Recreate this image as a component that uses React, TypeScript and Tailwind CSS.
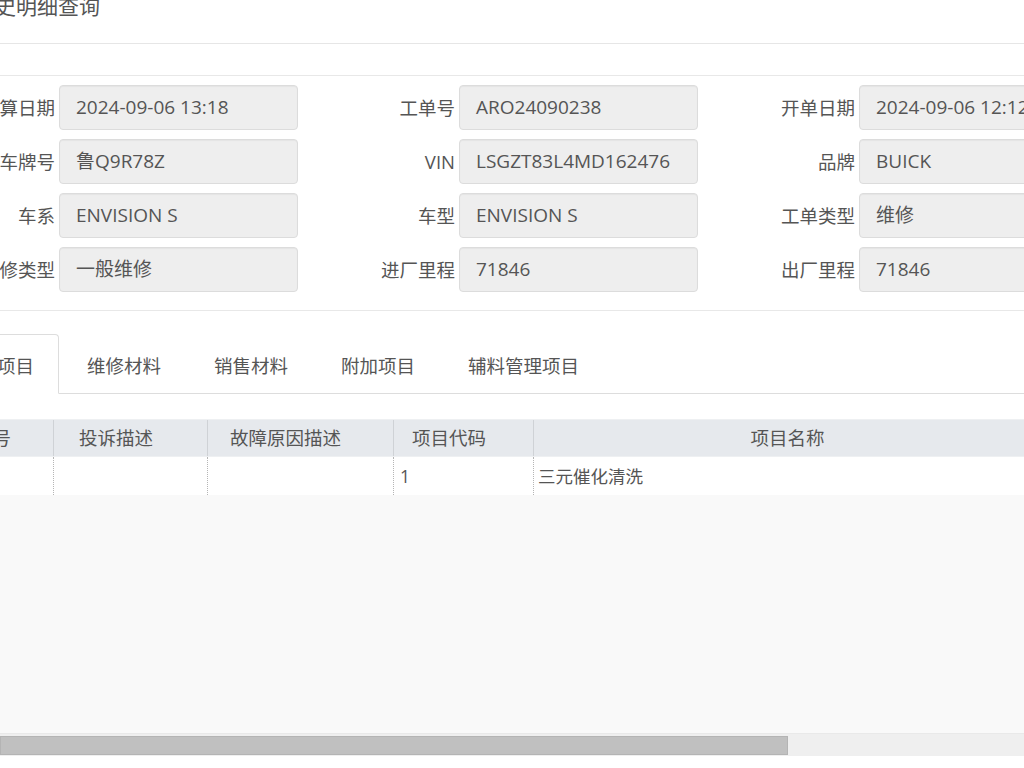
import React from "react";

const font = { fontFamily: '"Open Sans", "Noto Sans CJK SC", sans-serif' };

const rows: [string, string][][] = [
  [["结算日期", "2024-09-06 13:18"], ["工单号", "ARO24090238"], ["开单日期", "2024-09-06 12:12"]],
  [["车牌号", "鲁Q9R78Z"], ["VIN", "LSGZT83L4MD162476"], ["品牌", "BUICK"]],
  [["车系", "ENVISION S"], ["车型", "ENVISION S"], ["工单类型", "维修"]],
  [["维修类型", "一般维修"], ["进厂里程", "71846"], ["出厂里程", "71846"]],
];

const tabs = ["维修项目", "维修材料", "销售材料", "附加项目", "辅料管理项目"];

export default function App() {
  return (
    <div className="w-[1024px] h-[768px] overflow-hidden bg-white text-[#555]" style={font}>
      <div className="w-[1400px] ml-[-41px] flex flex-col">
        {/* title */}
        <div className="h-[44px] border-b border-[#e6e6e6]">
          <div className="text-[21px] leading-[21px] text-[#555] mt-[-4px] ml-[15px]">历史明细查询</div>
        </div>
        <div className="h-[32px] border-b border-[#e8e8e8]" />
        {/* form */}
        <div className="flex flex-col gap-[9px] pt-[9px] pb-[18px] border-b border-[#e8e8e8]">
          {rows.map((r, i) => (
            <div key={i} className="flex">
              {r.map(([label, value], j) => (
                <div key={j} className="w-[400px] flex items-center">
                  <div className="w-[100px] pr-[4px] text-right text-[18.5px] text-[#555] whitespace-nowrap">{label}</div>
                  <div className="w-[239px] h-[45px] flex items-center pl-[16px] bg-[#eeeeee] border border-[#dcdcdc] rounded-[4px] shadow-[inset_0_1px_1px_rgba(0,0,0,0.04)] text-[19px] text-[#555] whitespace-nowrap overflow-hidden">
                    {value}
                  </div>
                </div>
              ))}
            </div>
          ))}
        </div>
        {/* tabs */}
        <div className="mt-[23px] flex border-b border-[#dddddd] ml-[-24px]">
          {tabs.map((t, i) => (
            <div
              key={t}
              className={
                "h-[59px] px-[24px] mr-[3px] pt-[4px] flex items-center text-[18.5px] text-[#555] border rounded-t-[4px] whitespace-nowrap " +
                (i === 0 ? "border-[#dddddd] border-b-white bg-white mb-[-1px] h-[60px]" : "border-transparent")
              }
            >
              {t}
            </div>
          ))}
        </div>
        {/* table */}
        <div className="mt-[25px] flex flex-col">
          <div className="flex h-[38px] bg-[#e6e9ed] border-t border-[#eef0f2] border-b border-[#d3d6da] text-[18.5px] text-[#555]">
            <div className="w-[95px] border-r border-[#cfd2d6] flex items-center justify-end pr-[42px]">序号</div>
            <div className="w-[154px] border-r border-[#cfd2d6] flex items-center pl-[25px]">投诉描述</div>
            <div className="w-[186px] border-r border-[#cfd2d6] flex items-center pl-[22px]">故障原因描述</div>
            <div className="w-[140px] border-r border-[#cfd2d6] flex items-center pl-[18px]">项目代码</div>
            <div className="w-[508px] border-r border-[#cfd2d6] flex items-center justify-center">项目名称</div>
            <div className="flex-1" />
          </div>
          <div className="flex h-[38px] bg-white text-[17.5px] text-[#555]">
            <div className="w-[95px] border-r border-dotted border-[#b5b5b5]" />
            <div className="w-[154px] border-r border-dotted border-[#b5b5b5]" />
            <div className="w-[186px] border-r border-dotted border-[#b5b5b5]" />
            <div className="w-[140px] border-r border-dotted border-[#b5b5b5] flex items-center pl-[6px]">1</div>
            <div className="w-[508px] flex items-center pl-[4px]">三元催化清洗</div>
            <div className="flex-1" />
          </div>
          <div className="h-[238px] bg-[#f9f9f9]" />
          {/* scrollbar */}
          <div className="ml-[41px] w-[1024px] h-[23px] bg-[#efefef] border-t border-[#e9e9e9] flex items-center">
            <div className="w-[788px] h-[19px] bg-[#c0c0c0] border border-[#b4b4b4]" />
          </div>
          <div className="h-[20px] bg-white" />
        </div>
      </div>
    </div>
  );
}
